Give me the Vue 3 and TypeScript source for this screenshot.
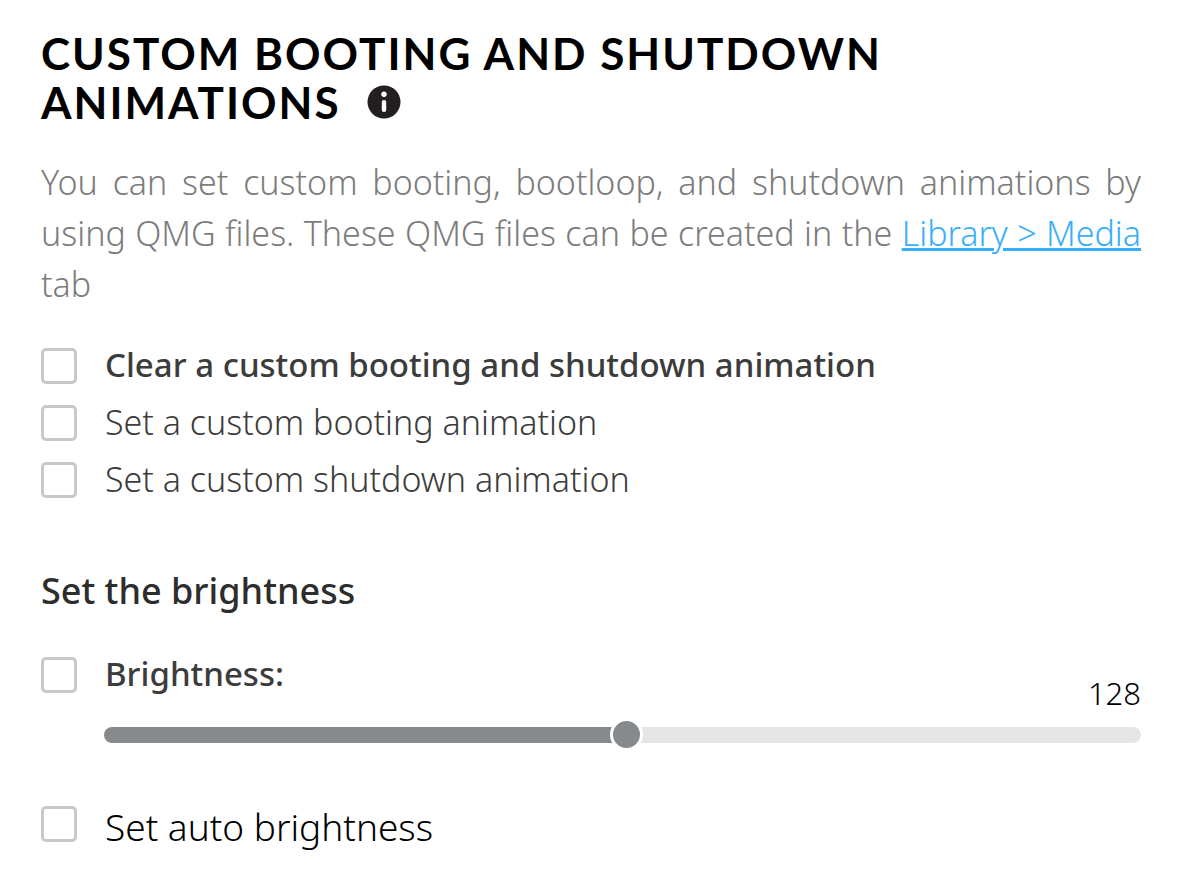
<script setup lang="ts">
import { computed, ref } from 'vue'

const MAX_LEVEL = 254

const clear = ref(false)
const booting = ref(false)
const shutdown = ref(false)
const brightnessOn = ref(false)
const auto = ref(false)
const level = ref(128)
const fill = computed(() => `${(level.value / MAX_LEVEL) * 100}%`)
</script>

<template>
  <main class="page">
    <h1>
      Custom booting and shutdown animations
      <button class="info" type="button" aria-label="Information">
        <svg viewBox="0 0 34 34" aria-hidden="true">
          <circle cx="17" cy="17" r="16.5" fill="#231f20" />
          <circle cx="17" cy="9.2" r="2.7" fill="#fff" />
          <rect x="14.8" y="15" width="4.4" height="12" rx="2" fill="#fff" />
        </svg>
      </button>
    </h1>
    <p class="intro">
      You can set custom booting, bootloop, and shutdown animations by using QMG files. These QMG
      files can be created in the <a href="#library">Library &gt; Media</a> tab
    </p>
    <div class="options">
      <label class="row strong"><input v-model="clear" type="checkbox" /><span>Clear a custom booting and shutdown animation</span></label>
      <label class="row"><input v-model="booting" type="checkbox" /><span>Set a custom booting animation</span></label>
      <label class="row"><input v-model="shutdown" type="checkbox" /><span>Set a custom shutdown animation</span></label>
    </div>
    <h2>Set the brightness</h2>
    <label class="row strong"><input v-model="brightnessOn" type="checkbox" /><span>Brightness:</span></label>
    <div class="level">
      <output for="level">{{ level }}</output>
      <input id="level" v-model.number="level" class="slider" type="range" min="0" :max="MAX_LEVEL" aria-label="Brightness level" :style="{ '--fill': fill }" />
    </div>
    <label class="row auto"><input v-model="auto" type="checkbox" /><span>Set auto brightness</span></label>
  </main>
</template>

<style scoped>
.page {
  padding: 29px 52px 20px 41px;
  font-family: "Noto Sans", sans-serif;
  font-weight: 330;
  color: #000;
}
h1 {
  margin: 0;
  font: 700 44px/49px Lato, sans-serif;
  letter-spacing: 2px;
  text-transform: uppercase;
}
.info {
  width: 34px;
  height: 34px;
  margin-left: 14px;
  padding: 0;
  border: 0;
  background: none;
}
.info svg { display: block; }
.intro {
  margin: 30px 0 0;
  font-size: 34px;
  font-weight: 310;
  line-height: 51px;
  color: #7c7c7c;
  text-align: justify;
}
.intro a { color: #38aefa; text-decoration-thickness: 3px; }
.options { margin-top: 27px; }
.row {
  display: flex;
  align-items: center;
  gap: 28px;
  height: 57px;
  font-size: 34px;
  line-height: 44px;
  color: #3c3c3c;
}
.row span { padding-bottom: 2px; }
.strong { font-size: 33px; font-weight: 500; }
.row input {
  appearance: none;
  flex: none;
  width: 36px;
  height: 36px;
  margin: 0;
  border: 3px solid #c8c8c8;
  border-radius: 5px;
  background: #fff;
}
.row input:checked { background: #868a8c; }
h2 {
  margin: 55px 0 27px;
  font-size: 36px;
  line-height: 56px;
  font-weight: 500;
  color: #2d2d2d;
}
.level {
  display: flex;
  flex-direction: column;
  margin: -30px 0 0 63px;
}
.level output {
  align-self: flex-end;
  font-size: 31px;
  line-height: 40px;
}
.slider {
  appearance: none;
  width: 100%;
  height: 30px;
  margin: 7px 0 0;
  background: none;
}
.slider::-webkit-slider-runnable-track {
  height: 16px;
  border-radius: 8px;
  background: linear-gradient(to right, #868a8c var(--fill), #e5e5e5 var(--fill));
}
.slider::-webkit-slider-thumb {
  appearance: none;
  box-sizing: border-box;
  width: 33px;
  height: 33px;
  margin-top: -9px;
  border: 3px solid #fff;
  border-radius: 50%;
  background: #868a8c;
}
.auto {
  margin-top: 45px;
  font-size: 37px;
  color: #000;
}
.auto span { padding: 7px 0 0; }
</style>
